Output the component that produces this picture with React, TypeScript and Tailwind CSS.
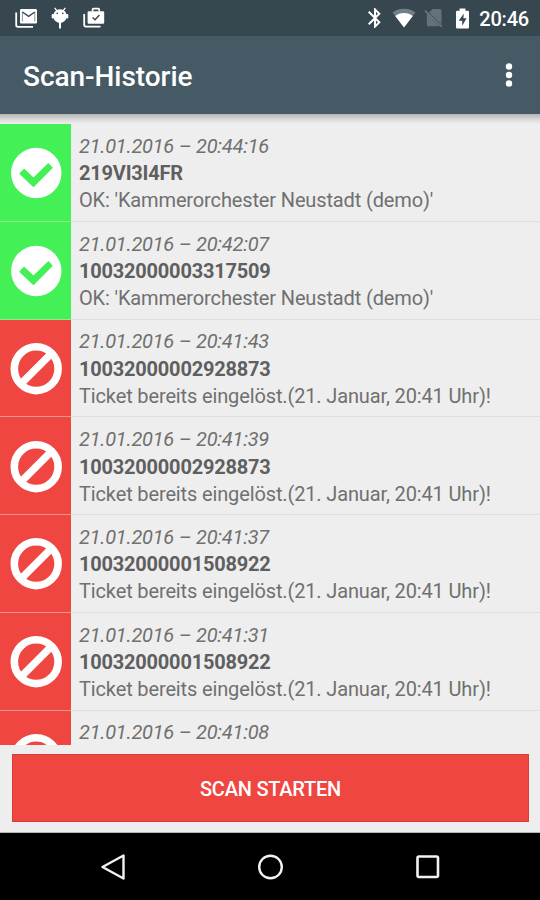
import React from "react";
import { MdBluetooth } from "react-icons/md";

type Scan = { time: string; code?: string; message?: string; ok: boolean };

const OK_TEXT = "OK: 'Kammerorchester Neustadt (demo)'";
const USED_TEXT = "Ticket bereits eingelöst.(21. Januar, 20:41 Uhr)!";

const scans: Scan[] = [
  { time: "20:44:16", code: "219VI3I4FR", message: OK_TEXT, ok: true },
  { time: "20:42:07", code: "10032000003317509", message: OK_TEXT, ok: true },
  { time: "20:41:43", code: "10032000002928873", message: USED_TEXT, ok: false },
  { time: "20:41:39", code: "10032000002928873", message: USED_TEXT, ok: false },
  { time: "20:41:37", code: "10032000001508922", message: USED_TEXT, ok: false },
  { time: "20:41:31", code: "10032000001508922", message: USED_TEXT, ok: false },
  { time: "20:41:08", ok: false },
];

function MailIcon() {
  return (
    <svg width="22" height="20" viewBox="0 0 22 20" fill="none">
      <path d="M1.2 4.5V17a1.8 1.8 0 0 0 1.8 1.8h15" stroke="#fff" strokeWidth="1.8" />
      <rect x="5" y="1" width="17" height="14.6" rx="1.4" fill="#fff" />
      <path d="M7.4 13.5V3.8" stroke="#8a959b" strokeWidth="1" />
      <path d="M19.8 13.500V3.800" stroke="#8a959b" strokeWidth="1" />
      <path d="M7.400 4l6.200 4.400L19.800 4" stroke="#37474f" strokeWidth="1.400" />
    </svg>
  );
}

function DroidIcon() {
  return (
    <svg width="18" height="22" viewBox="0 0 18 22">
      <path d="M3.7.8l2.2 3M14.3.8l-2.2 3" stroke="#fff" strokeWidth="1.3" />
      <path d="M2.200 8.600a6.800 6.300 0 0 1 13.600 0c0 4.200-2.800 7.300-6.800 7.300s-6.800-3.100-6.800-7.300z" fill="#fff" />
      <rect x=".7" y="7" width="2.400" height="4.400" rx="1.200" fill="#fff" />
      <rect x="14.900" y="7" width="2.400" height="4.400" rx="1.200" fill="#fff" />
      <path d="M9 15v6.600" stroke="#fff" strokeWidth="2" />
      <circle cx="6.200" cy="6.400" r=".8" fill="#37474f" />
      <circle cx="11.800" cy="6.400" r=".8" fill="#37474f" />
    </svg>
  );
}

function BriefcaseIcon() {
  return (
    <svg width="22" height="21" viewBox="0 0 22 21" fill="none">
      <path d="M1.200 7v10.800A1.800 1.800 0 0 0 3 19.600h14.500" stroke="#fff" strokeWidth="1.800" />
      <rect x="4.600" y="4.200" width="16.600" height="12.600" rx="1.300" fill="#fff" />
      <path d="M9.600 4.500V2.600q0-.900.900-.900h4.800q.9 0 .9.900v1.900" stroke="#fff" strokeWidth="1.700" />
      <path d="M9.600 10.400l2.500 2.300 4.300-4.600" stroke="#37474f" strokeWidth="1.400" />
    </svg>
  );
}

function WifiIcon() {
  return (
    <svg width="24" height="20" viewBox="0 0 24 20">
      <path d="M12 19.500L.6 4.600C3.600 2.100 7.500.7 12 .7s8.400 1.400 11.400 3.900z" fill="#73808a" />
      <path d="M12 19.500L3.200 8C5.600 6 8.700 4.900 12 4.900s6.400 1.100 8.800 3.100z" fill="#fff" />
    </svg>
  );
}

function NoSimIcon() {
  return (
    <svg width="20" height="20" viewBox="0 0 20 20">
      <path d="M5 4.500L8.500 1H16a1.500 1.500 0 0 1 1.500 1.500v14zM2.800 5.500L15.500 18.300H4.300a1.500 1.500 0 0 1-1.500-1.500z" fill="#63727b" />
      <path d="M1 2.600l16.800 16.200" stroke="#6f7c84" strokeWidth="1.500" />
    </svg>
  );
}

function BatteryIcon() {
  return (
    <svg width="15" height="21" viewBox="0 0 15 21">
      <path d="M4.600.500h5.800v2.200h2.400q1.200 0 1.200 1.200v15.400q0 1.200-1.200 1.200H2.200Q1 20.500 1 19.300V3.900q0-1.200 1.200-1.200h2.400z" fill="#fff" />
      <path d="M8.800 5.500L3.700 12.700h3.500v5l4.400-7.500H8.400z" fill="#37474f" />
    </svg>
  );
}

function StatusIcon({ ok }: { ok: boolean }) {
  return ok ? (
    <svg width="52" height="52" viewBox="0 0 52 52">
      <circle cx="26.300" cy="26" r="25.200" fill="#fff" />
      <path
        d="M23.500 39.200L10.300 26.600l3.700-3.900 9.500 8.900L38.300 17l3.500 3.700z"
        fill="#43f055"
        stroke="#43f055"
        strokeWidth="1.600"
        strokeLinejoin="round"
      />
    </svg>
  ) : (
    <svg width="52" height="52" viewBox="0 0 52 52" fill="none">
      <circle cx="26.200" cy="25.700" r="21.900" stroke="#fff" strokeWidth="7.600" />
      <path d="M11.200 40.700L41.200 10.700" stroke="#fff" strokeWidth="7.400" />
    </svg>
  );
}

function ScanRow({ scan }: { scan: Scan }) {
  return (
    <li className="flex h-[97.75px] shrink-0">
      <div className="flex w-[71px] flex-col">
        <div className={`flex flex-1 items-center justify-center pt-[2px] ${scan.ok ? "bg-[#43f055]" : "bg-[#f04641]"}`}>
          <StatusIcon ok={scan.ok} />
        </div>
        <div className={`h-px ${scan.ok ? "bg-[#8ee995]" : "bg-[#ed9490]"}`} />
      </div>
      <div className="flex-1 whitespace-nowrap border-b border-[#dedede] pl-2 pt-[8.8px] text-[20px] leading-[27px] text-[#707070]">
        <p className="italic tracking-[-0.24px]">21.01.2016 – {scan.time}</p>
        {scan.code && <p className="pt-[0.500px] font-bold tracking-[-0.21px] text-[#5f5f5f]">{scan.code}</p>}
        {scan.message && <p className="tracking-[-0.135px]">{scan.message}</p>}
      </div>
    </li>
  );
}

export default function App() {
  return (
    <div className="flex h-[900px] w-[540px] flex-col overflow-hidden bg-[#eeeeee] font-['Roboto',sans-serif]">
      <div className="flex h-9 shrink-0 items-center justify-between bg-[#37474f] pl-[15px] pr-[11px] text-white">
        <div className="flex items-center">
          <MailIcon />
          <div className="ml-[14px]"><DroidIcon /></div>
          <div className="ml-[14px] -mt-[2px]"><BriefcaseIcon /></div>
        </div>
        <div className="flex items-center">
          <MdBluetooth size={24} />
          <div className="ml-[5px]"><WifiIcon /></div>
          <div className="ml-[8px]"><NoSimIcon /></div>
          <div className="ml-[11px]"><BatteryIcon /></div>
          <span className="ml-[9px] mt-[2px] text-[20px] font-medium leading-6 tracking-[-0.2px]">20:46</span>
        </div>
      </div>

      <header className="flex h-[78px] shrink-0 items-center justify-between bg-[#455a64] pl-[23px] pr-[27px] text-white">
        <h1 className="mt-[4px] text-[28px] font-medium leading-8 tracking-[-0.05px]">Scan-Historie</h1>
        <svg width="8" height="26" viewBox="0 0 8 26" fill="#fff">
          <circle cx="4" cy="4.500" r="3.200" />
          <circle cx="4" cy="13" r="3.200" />
          <circle cx="4" cy="21.500" r="3.200" />
        </svg>
      </header>
      <div className="h-[10px] shrink-0 bg-gradient-to-b from-[#b5b4b4] via-[#d9d8d8] via-50% to-[#eeeeee]" />

      <ul className="flex h-[621px] shrink-0 flex-col overflow-hidden">
        {scans.map((scan) => (
          <ScanRow key={scan.time} scan={scan} />
        ))}
      </ul>

      <div className="h-[88px] shrink-0 border-b border-[#b5b5b5] pl-[12px] pr-[11px] pt-[9px]">
        <button className="block h-[68px] w-full border border-[#df3c36] bg-[#f04641] pt-[2px] text-[20px] font-medium tracking-[-0.22px] text-white">
          SCAN STARTEN
        </button>
      </div>

      <nav className="flex flex-1 items-center justify-between bg-black pl-[100px] pr-[98px]">
        <svg width="27" height="28" viewBox="0 0 27 28" fill="none" stroke="#f2f2f2" strokeWidth="2.400" strokeLinejoin="round">
          <path d="M2.500 14L23.500 2.500v23z" />
        </svg>
        <svg width="28" height="28" viewBox="0 0 28 28" fill="none" stroke="#f2f2f2" strokeWidth="2.400">
          <circle cx="13.500" cy="14" r="11.300" />
        </svg>
        <svg width="28" height="28" viewBox="0 0 28 28" fill="none" stroke="#f2f2f2" strokeWidth="2.600">
          <rect x="3.500" y="3.500" width="20.500" height="20.500" rx="1.500" />
        </svg>
      </nav>
    </div>
  );
}
